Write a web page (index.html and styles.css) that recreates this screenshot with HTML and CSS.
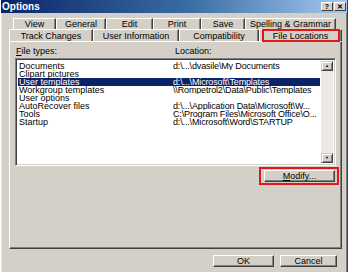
FILE: index.html
```html
<!DOCTYPE html>
<html lang="en">
<head>
    <meta charset="UTF-8">
    <title>Options</title>
    <link rel="stylesheet" href="styles.css">
</head>
<body>
    <div class="window">
        <div class="titlebar">
            <span class="title">Options</span>
            <div class="title-buttons">
                <span class="tbtn">?</span>
                <span class="tbtn">&#x2715;</span>
            </div>
        </div>

        <div class="tabstrip">
            <div class="tab-row back">
                <div class="tab w-view">View</div>
                <div class="tab w-general">General</div>
                <div class="tab w-edit">Edit</div>
                <div class="tab w-print">Print</div>
                <div class="tab w-save">Save</div>
                <div class="tab w-spelling">Spelling &amp; Grammar</div>
            </div>
            <div class="tab-row front">
                <div class="tab w-track">Track Changes</div>
                <div class="tab w-user">User Information</div>
                <div class="tab w-compat">Compatibility</div>
                <div class="tab w-files selected">File Locations</div>
            </div>
        </div>

        <div class="panel">
            <div class="labels">
                <span class="type-label"><u>F</u>ile types:</span>
                <span class="loc-label">Location:</span>
            </div>
            <div class="listbox">
                <div class="rows">
                    <div class="row"><span class="type">Documents</span><span class="loc">d:\...\dvasile\My Documents</span></div>
                    <div class="row"><span class="type">Clipart pictures</span><span class="loc"></span></div>
                    <div class="row active"><span class="type">User templates</span><span class="loc">d:\...\Microsoft\Templates</span></div>
                    <div class="row"><span class="type">Workgroup templates</span><span class="loc">\\Rompetrol2\Data\Public\Templates</span></div>
                    <div class="row"><span class="type">User options</span><span class="loc"></span></div>
                    <div class="row"><span class="type">AutoRecover files</span><span class="loc">d:\...\Application Data\Microsoft\W...</span></div>
                    <div class="row"><span class="type">Tools</span><span class="loc">C:\Program Files\Microsoft Office\O...</span></div>
                    <div class="row"><span class="type">Startup</span><span class="loc">d:\...\Microsoft\Word\STARTUP</span></div>
                </div>
                <div class="scrollbar">
                    <div class="sbtn">&#9650;</div>
                    <div class="track"></div>
                    <div class="sbtn">&#9660;</div>
                </div>
            </div>
            <div class="modify-row">
                <span class="highlight">
                    <button class="btn modify"><u>M</u>odify...</button>
                </span>
            </div>
        </div>

        <div class="footer">
            <button class="btn ok">OK</button>
            <button class="btn cancel">Cancel</button>
        </div>
    </div>
</body>
</html>
```

FILE: styles.css
```css
body {
    margin: 0;
    font-family: "Liberation Sans", Arial, sans-serif;
    font-size: 9px;
    color: #000;
}

.window {
    width: 348px;
    height: 272px;
    box-sizing: border-box;
    background: #d4d0c8;
    border-left: 1px solid #fff;
    border-right: 1px solid #404040;
    box-shadow: inset 1px 0 #e8e6e2, inset -1px 0 #808080;
    display: flex;
    flex-direction: column;
    overflow: hidden;
}

/* title bar */
.titlebar {
    height: 13px;
    margin: 0 -1px;
    background: linear-gradient(to right, #0a246a, #3a6ea5 55%, #a6caf0);
    display: flex;
    align-items: center;
    justify-content: space-between;
    padding: 0 2px 0 2px;
}

.title {
    color: #fff;
    font-weight: bold;
    font-size: 10px;
}

.title-buttons {
    display: flex;
    gap: 1px;
}

.tbtn {
    width: 12px;
    height: 9px;
    box-sizing: border-box;
    background: #d4d0c8;
    border: 1px solid;
    border-color: #fff #404040 #404040 #fff;
    font-size: 7px;
    font-weight: bold;
    line-height: 7px;
    text-align: center;
}

/* tabs */
.tabstrip {
    margin-top: 5px;
}

.tab-row {
    display: flex;
}

.tab-row.back {
    margin-left: 12px;
    height: 11px;
}

.tab-row.front {
    margin-left: 8px;
    height: 12px;
}

.tab {
    box-sizing: border-box;
    border-top: 1px solid #fff;
    border-left: 1px solid #fff;
    border-right: 1px solid #404040;
    box-shadow: inset -1px 0 #808080;
    text-align: center;
    line-height: 11px;
    white-space: nowrap;
    position: relative;
}

.tab-row.front .tab {
    line-height: 12px;
}

.w-view { width: 43px; }
.w-general { width: 50px; }
.w-edit { width: 47px; }
.w-print { width: 48px; }
.w-save { width: 44px; }
.w-spelling { width: 91px; }

.w-track { width: 84px; }
.w-user { width: 86px; }
.w-compat { width: 80px; }
.w-files { width: 83px; }

.tab.selected::after {
    content: "";
    position: absolute;
    top: -1px;
    bottom: -1px;
    left: 2px;
    right: 1px;
    border: 2px solid #e01818;
}

/* panel */
.panel {
    margin-left: 8px;
    width: 333px;
    height: 208px;
    box-sizing: border-box;
    border-top: 1px solid #fff;
    border-left: 1px solid #fff;
    border-right: 1px solid #404040;
    border-bottom: 1px solid #404040;
    box-shadow: inset -1px -1px #808080;
    padding: 3px 5px 0 5px;
    display: flex;
    flex-direction: column;
}

.labels {
    height: 13px;
    line-height: 13px;
    display: flex;
    padding-left: 1px;
}

.type-label {
    width: 159px;
}

.listbox {
    height: 108px;
    box-sizing: border-box;
    background: #fff;
    border: 1px solid;
    border-color: #808080 #fff #fff #808080;
    box-shadow: inset 1px 1px #404040, inset -1px -1px #d4d0c8;
    padding: 2px;
    display: flex;
}

.rows {
    flex: 1;
    min-width: 0;
    padding-top: 1px;
    overflow: hidden;
}

.row {
    display: flex;
    height: 8px;
    line-height: 8px;
    white-space: nowrap;
    margin-right: 1px;
}

.row .type {
    width: 154px;
    flex: none;
    padding-left: 1px;
}

.row .loc {
    flex: 1;
    overflow: hidden;
    letter-spacing: -0.15px;
}

.row.active {
    background: #0a246a;
    color: #fff;
}

.scrollbar {
    width: 12px;
    display: flex;
    flex-direction: column;
}

.sbtn {
    height: 10px;
    box-sizing: border-box;
    background: #d4d0c8;
    border: 1px solid;
    border-color: #d4d0c8 #404040 #404040 #d4d0c8;
    box-shadow: inset 1px 1px #fff, inset -1px -1px #808080;
    font-size: 4px;
    line-height: 8px;
    text-align: center;
    color: #000;
}

.track {
    flex: 1;
    background: #eceae6;
}

.modify-row {
    display: flex;
    justify-content: flex-end;
    margin-top: 1px;
    margin-right: -3px;
}

.highlight {
    display: block;
    border: 2px solid #e01818;
    padding: 1px 2px 1px 3px;
}

/* buttons */
.btn {
    display: block;
    box-sizing: border-box;
    height: 12px;
    padding: 0;
    background: #d4d0c8;
    border: 1px solid;
    border-color: #fff #404040 #404040 #fff;
    box-shadow: inset -1px -1px #808080;
    font-family: "Liberation Sans", Arial, sans-serif;
    font-size: 9px;
    line-height: 10px;
    color: #000;
}

.modify {
    width: 71px;
}

.footer {
    display: flex;
    justify-content: flex-end;
    gap: 6px;
    margin-top: 6px;
    padding-right: 10px;
}

.ok {
    width: 61px;
}

.cancel {
    width: 57px;
}
```
